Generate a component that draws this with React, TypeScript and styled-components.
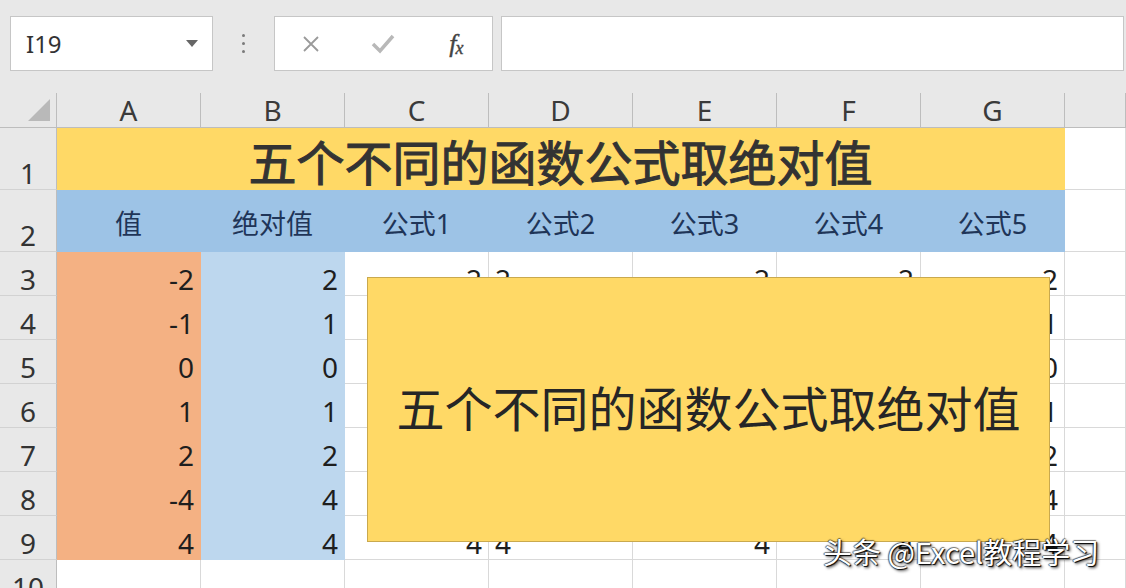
import React from 'react';
import styled, { createGlobalStyle } from 'styled-components';

const GlobalStyle = createGlobalStyle`
  html, body {
    margin: 0;
    padding: 0;
    background: #fff;
  }
  body {
    font-family: "Noto Sans", "Noto Sans CJK SC", sans-serif;
    overflow: hidden;
  }
`;

const Page = styled.div`
  width: 1126px;
  height: 588px;
  overflow: hidden;
  background: #fff;
`;

const Toolbar = styled.div`
  height: 93px;
  box-sizing: border-box;
  padding: 16px 2px 0 10px;
  background: #e8e8e8;
  display: flex;
  align-items: flex-start;
`;

const Box = styled.div`
  height: 55px;
  box-sizing: border-box;
  background: #fff;
  border: 1px solid #c6c6c6;
`;

const NameBox = styled(Box)`
  width: 203px;
  padding: 0 14px 0 15px;
  display: flex;
  align-items: center;
  justify-content: space-between;
  font-size: 24px;
  color: #333;
`;

const Caret = styled.span`
  width: 0;
  height: 0;
  border-left: 6px solid transparent;
  border-right: 6px solid transparent;
  border-top: 7px solid #666;
`;

const Splitter = styled.div`
  width: 61px;
  height: 55px;
  display: flex;
  flex-direction: column;
  align-items: center;
  justify-content: center;
  gap: 5px;
`;

const Dot = styled.span`
  width: 3px;
  height: 3px;
  border-radius: 50%;
  background: #7a7a7a;
`;

const FuncBox = styled(Box)`
  width: 219px;
  display: grid;
  grid-template-columns: repeat(3, 1fr);
  align-items: center;
  justify-items: center;
`;

const Fx = styled.span`
  font-family: "Liberation Serif", "DejaVu Serif", serif;
  font-style: italic;
  font-size: 26px;
  color: #444;
  letter-spacing: -1px;
  -webkit-text-stroke: 0.4px #444;
  sub {
    font-size: 18px;
    vertical-align: -2px;
  }
`;

const FormulaBar = styled(Box)`
  flex: 1;
  margin-left: 8px;
`;

const Sheet = styled.div`
  position: relative;
  display: grid;
  grid-template-columns: 57px repeat(7, 144px) 1fr;
  grid-template-rows: 35px 62px 62px repeat(7, 44px) 44px;
`;

const Corner = styled.div`
  background: #e8e8e8;
  border-right: 1px solid #bdbdbd;
  border-bottom: 1px solid #bdbdbd;
  box-sizing: border-box;
  display: flex;
  align-items: flex-end;
  justify-content: flex-end;
  padding: 0 6px 6px 0;
`;

const ColHead = styled.div`
  background: #e8e8e8;
  border-right: 1px solid #bdbdbd;
  border-bottom: 1px solid #bdbdbd;
  box-sizing: border-box;
  display: flex;
  align-items: center;
  justify-content: center;
  font-size: 28px;
  color: #3a3a3a;
  line-height: 1;
`;

const RowHead = styled.div`
  background: #e8e8e8;
  border-right: 1px solid #bdbdbd;
  border-bottom: 1px solid #d2d2d2;
  box-sizing: border-box;
  display: flex;
  align-items: flex-end;
  justify-content: center;
  font-size: 28px;
  line-height: 1.1;
  color: #333;
`;

const Cell = styled.div<{ $bg?: string; $align?: 'left' | 'right' | 'center' }>`
  background: ${p => p.$bg || '#fff'};
  border-right: 1px solid ${p => (p.$bg ? 'transparent' : '#d9d9d9')};
  border-bottom: 1px solid ${p => (p.$bg ? 'transparent' : '#d9d9d9')};
  box-sizing: border-box;
  display: flex;
  align-items: flex-end;
  justify-content: ${p => (p.$align === 'left' ? 'flex-start' : p.$align === 'center' ? 'center' : 'flex-end')};
  padding: 0 6px;
  font-size: 28px;
  line-height: 1.1;
  color: #1e1e1e;
  white-space: nowrap;
`;

const TitleCell = styled(Cell)`
  grid-column: 2 / span 7;
  align-items: center;
  padding-top: 2px;
  font-family: "Noto Sans CJK SC", sans-serif;
  font-size: 48px;
  color: #333;
  -webkit-text-stroke: 1px #333;
  line-height: 1;
`;

const HeadCell = styled(Cell)`
  align-items: center;
  padding-top: 6px;
  font-size: 27px;
  color: #1f3558;
  line-height: 1;
`;

const Shape = styled.div`
  position: absolute;
  left: 367px;
  top: 184px;
  width: 683px;
  height: 265px;
  box-sizing: border-box;
  padding-bottom: 8px;
  background: #ffd966;
  border: 1px solid #c9a94e;
  display: flex;
  align-items: center;
  justify-content: center;
  font-family: "Noto Sans CJK SC", sans-serif;
  font-size: 48px;
  color: #262626;
  line-height: 1;
`;

const Watermark = styled.div`
  position: absolute;
  left: 823px;
  top: 444px;
  font-family: "Noto Sans CJK SC", sans-serif;
  font-size: 29px;
  line-height: 1;
  color: #fff;
  white-space: nowrap;
  text-shadow: 1px 1px 1px #000, -1px 0 1px rgba(0, 0, 0, 0.6), 0 -1px 1px rgba(0, 0, 0, 0.5), 2px 2px 3px rgba(0, 0, 0, 0.7);
`;

const cols = ['A', 'B', 'C', 'D', 'E', 'F', 'G', ''];
const heads = ['值', '绝对值', '公式1', '公式2', '公式3', '公式4', '公式5'];
const values = [-2, -1, 0, 1, 2, -4, 4];
const title = '五个不同的函数公式取绝对值';

export default function App() {
  return (
    <Page>
      <GlobalStyle />
      <Toolbar>
        <NameBox>
          <span>I19</span>
          <Caret />
        </NameBox>
        <Splitter>
          <Dot />
          <Dot />
          <Dot />
        </Splitter>
        <FuncBox>
          <svg width="20" height="20" viewBox="0 0 20 20">
            <path d="M3 3 L17 17 M17 3 L3 17" stroke="#9a9a9a" strokeWidth="1.8" fill="none" />
          </svg>
          <svg width="24" height="22" viewBox="0 0 24 22">
            <path d="M2 11 L9 18 L22 3" stroke="#b8b8b8" strokeWidth="3.5" fill="none" />
          </svg>
          <Fx>
            f<sub>x</sub>
          </Fx>
        </FuncBox>
        <FormulaBar />
      </Toolbar>

      <Sheet>
        <Corner>
          <svg width="22" height="22" viewBox="0 0 22 22">
            <polygon points="22,0 22,22 0,22" fill="#b9b9b9" />
          </svg>
        </Corner>
        {cols.map((c, i) => (
          <ColHead key={'h' + i}>{c}</ColHead>
        ))}

        <RowHead>1</RowHead>
        <TitleCell $bg="#ffd966" $align="center">{title}</TitleCell>
        <Cell />

        <RowHead>2</RowHead>
        {heads.map(h => (
          <HeadCell key={h} $bg="#9dc3e6" $align="center">
            {h}
          </HeadCell>
        ))}
        <Cell />

        {values.map((v, r) => {
          const abs = Math.abs(v);
          return (
            <React.Fragment key={r}>
              <RowHead>{r + 3}</RowHead>
              <Cell $bg="#f4b183">{v}</Cell>
              <Cell $bg="#bdd7ee">{abs}</Cell>
              <Cell>{abs}</Cell>
              <Cell $align="left">{abs}</Cell>
              <Cell>{abs}</Cell>
              <Cell>{abs}</Cell>
              <Cell>{abs}</Cell>
              <Cell />
            </React.Fragment>
          );
        })}

        <RowHead>10</RowHead>
        {cols.map((_, i) => (
          <Cell key={'e' + i} />
        ))}

        <Shape>{title}</Shape>
        <Watermark>头条 @Excel教程学习</Watermark>
      </Sheet>
    </Page>
  );
}
